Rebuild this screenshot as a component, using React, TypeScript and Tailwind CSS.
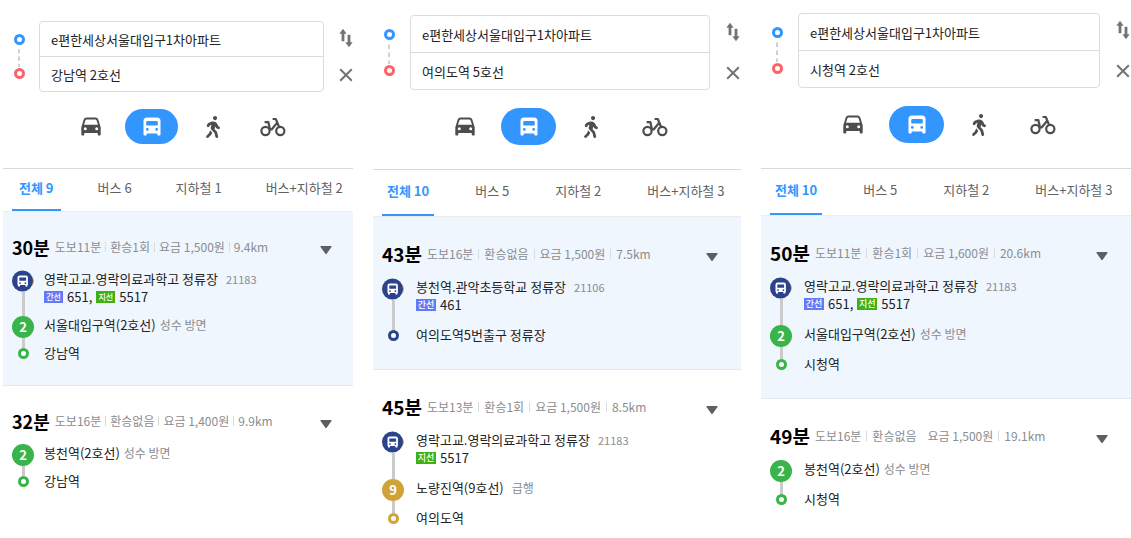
import { useState } from "react";
import { FaWalking } from "react-icons/fa";

type Kind = "bus" | "green" | "gold";
type Stop = {
  name: string;
  kind: Kind;
  line?: string;
  note?: string;
  code?: string;
  buses?: { type: "간선" | "지선"; no: string }[];
};
type Route = { time: string; facts: string[]; hideSecondDivider?: boolean; stops: Stop[] };
type Search = {
  id: string;
  compact?: boolean;
  top: string;
  tabsGap: string;
  to: string;
  tabs: string[];
  routes: Route[];
};

const FROM = "e편한세상서울대입구1차아파트";
const STATION: Stop = {
  name: "영락고교.영락의료과학고 정류장",
  kind: "bus",
  code: "21183",
  buses: [
    { type: "간선", no: "651," },
    { type: "지선", no: "5517" },
  ],
};

const SEARCHES: Search[] = [
  {
    id: "gangnam",
    compact: true,
    top: "pt-[21px]",
    tabsGap: "mt-6",
    to: "강남역 2호선",
    tabs: ["전체 9", "버스 6", "지하철 1", "버스+지하철 2"],
    routes: [
      {
        time: "30분",
        facts: ["도보11분", "환승1회", "요금 1,500원", "9.4km"],
        stops: [
          STATION,
          { name: "서울대입구역(2호선)", kind: "green", line: "2", note: "성수 방면" },
          { name: "강남역", kind: "green" },
        ],
      },
      {
        time: "32분",
        facts: ["도보16분", "환승없음", "요금 1,400원", "9.9km"],
        stops: [
          { name: "봉천역(2호선)", kind: "green", line: "2", note: "성수 방면" },
          { name: "강남역", kind: "green" },
        ],
      },
    ],
  },
  {
    id: "yeouido",
    top: "pt-[15px]",
    tabsGap: "mt-6",
    to: "여의도역 5호선",
    tabs: ["전체 10", "버스 5", "지하철 2", "버스+지하철 3"],
    routes: [
      {
        time: "43분",
        facts: ["도보16분", "환승없음", "요금 1,500원", "7.5km"],
        stops: [
          { name: "봉천역.관악초등학교 정류장", kind: "bus", code: "21106", buses: [{ type: "간선", no: "461" }] },
          { name: "여의도역5번출구 정류장", kind: "bus" },
        ],
      },
      {
        time: "45분",
        facts: ["도보13분", "환승1회", "요금 1,500원", "8.5km"],
        stops: [
          { ...STATION, buses: [{ type: "지선", no: "5517" }] },
          { name: "노량진역(9호선)", kind: "gold", line: "9", note: "급행" },
          { name: "여의도역", kind: "gold" },
        ],
      },
    ],
  },
  {
    id: "cityhall",
    top: "pt-[13px]",
    tabsGap: "mt-[25px]",
    to: "시청역 2호선",
    tabs: ["전체 10", "버스 5", "지하철 2", "버스+지하철 3"],
    routes: [
      {
        time: "50분",
        facts: ["도보11분", "환승1회", "요금 1,600원", "20.6km"],
        stops: [
          STATION,
          { name: "서울대입구역(2호선)", kind: "green", line: "2", note: "성수 방면" },
          { name: "시청역", kind: "green" },
        ],
      },
      {
        time: "49분",
        facts: ["도보16분", "환승없음", "요금 1,500원", "19.1km"],
        hideSecondDivider: true,
        stops: [
          { name: "봉천역(2호선)", kind: "green", line: "2", note: "성수 방면" },
          { name: "시청역", kind: "green" },
        ],
      },
    ],
  },
];

const DISC = { bus: "bg-[#2b438b]", green: "bg-[#38b44a]", gold: "bg-[#cfa338]" };
const RING = { bus: "border-[#2b438b]", green: "border-[#38b44a]", gold: "border-[#cfa338]" };

function CarIcon() {
  return (
    <svg viewBox="0 0 20 19" className="h-[19px] w-5" fill="currentColor" aria-hidden="true">
      <path
        fillRule="evenodd"
        d="M5.500.5h9a3 3 0 0 1 2.800 2L19.300 9q.4 1 .4 2v6.500a1 1 0 0 1-1 1h-1a1 1 0 0 1-1-1V16H3.300v1.500a1 1 0 0 1-1 1h-1a1 1 0 0 1-1-1V11q0-1 .4-2L2.700 2.500a3 3 0 0 1 2.800-2zM5.700 2.500q-1 0-1.300.9L3 7.800h14l-1.400-4.400q-.3-.9-1.300-.9zM4.300 10.300a1.500 1.500 0 1 0 0 3 1.500 1.500 0 0 0 0-3zM15.700 10.300a1.500 1.500 0 1 0 0 3 1.500 1.500 0 0 0 0-3z"
      />
    </svg>
  );
}

function BusIcon() {
  return (
    <svg viewBox="0 0 18 19" className="h-[19px] w-[18px]" fill="currentColor" aria-hidden="true">
      <path
        fillRule="evenodd"
        d="M4 .5h10a3.500 3.500 0 0 1 3.500 3.500v13.500a1 1 0 0 1-1 1h-1.200a1 1 0 0 1-1-1V16.500H3.700v1a1 1 0 0 1-1 1H1.500a1 1 0 0 1-1-1V4A3.500 3.500 0 0 1 4 .5zM4.500 4a1.300 1.300 0 0 0-1.300 1.300v2.400q0 .8.800.8h10q.8 0 .8-.8V5.300A1.300 1.300 0 0 0 13.500 4zM4.300 11a1.400 1.400 0 1 0 0 2.800 1.400 1.400 0 0 0 0-2.800zM13.700 11a1.400 1.400 0 1 0 0 2.800 1.400 1.400 0 0 0 0-2.800z"
      />
    </svg>
  );
}

function BikeIcon() {
  return (
    <svg viewBox="0 0 26 20" className="h-5 w-[26px]" fill="none" stroke="currentColor" strokeWidth="2.2" aria-hidden="true">
      <circle cx="5.5" cy="14" r="4.100" />
      <circle cx="20.300" cy="14" r="4.100" />
      <path d="M4.600 5.200h3.800l1.600 7.300h1.600l5.200-6.300M12.600 2h3.200l3.500 8.500" strokeLinejoin="round" />
    </svg>
  );
}

function SwapIcon() {
  return (
    <svg viewBox="0 0 14 20" className="h-5 w-[14px]" fill="currentColor" aria-hidden="true">
      <path d="M4 .8l3.600 5H5.400v7.400H2.600V5.800H.4zM10 19.200l-3.600-5h2.200V6.800h2.800v7.400h2.200z" />
    </svg>
  );
}

function CrossIcon() {
  return (
    <svg viewBox="0 0 14 14" className="size-[14px]" stroke="currentColor" strokeWidth="2" aria-hidden="true">
      <path d="M1.200 1.200l11.600 11.600M12.800 1.200L1.200 12.800" />
    </svg>
  );
}

function BusDisc() {
  return (
    <svg viewBox="0 0 22 22" className="size-[22px] shrink-0" aria-hidden="true">
      <ellipse cx="18" cy="11" rx="4" ry="4.5" fill="#e9a53a" />
      <circle cx="10.5" cy="11" r="10.5" fill="#2b438b" />
      <path
        fill="#fff"
        fillRule="evenodd"
        d="M7.500 5.500h6.400a2 2 0 0 1 2 2v7.600h-.5v1.300h-2v-1.300H8v1.300H6v-1.300h-.5V7.500a2 2 0 0 1 2-2zM7.300 7.500v3.300h6.800V7.500zM8 12.200a.9.9 0 1 0 0 1.800.9.9 0 0 0 0-1.800zM13.400 12.200a.9.9 0 1 0 0 1.800.9.9 0 0 0 0-1.800z"
      />
    </svg>
  );
}

function Marker({ stop, last }: { stop: Stop; last: boolean }) {
  if (last) {
    return (
      <div className="flex w-[22px] flex-col items-center">
        <span className="h-1 w-[3px] bg-[#cbcbcb]" />
        <span className={`size-[11px] rounded-full border-3 bg-white ${RING[stop.kind]}`} />
      </div>
    );
  }
  return (
    <div className="flex w-[22px] flex-col items-center">
      {stop.kind === "bus" ? (
        <BusDisc />
      ) : (
        <span
          className={`flex size-[22px] shrink-0 items-center justify-center rounded-full text-[13px] font-bold text-white ${DISC[stop.kind]}`}
        >
          {stop.line}
        </span>
      )}
      <span className="w-[3px] flex-1 bg-[#cbcbcb]" />
    </div>
  );
}

function StopRow({ stop, last, compact }: { stop: Stop; last: boolean; compact?: boolean }) {
  const gap = last ? "" : compact ? "pb-[10px]" : "pb-3";
  return (
    <li className={`flex ${compact ? "gap-[10px]" : "gap-3"}`}>
      <Marker stop={stop} last={last} />
      <div className={`text-[13px] leading-[18px] whitespace-nowrap text-[#222] ${gap}`}>
        <p className="flex items-center">
          {stop.name}
          {stop.note && (
            <span className={`text-xs leading-[18px] text-[#8a8d91] ${stop.kind === "gold" ? "ml-2" : "ml-1"}`}>
              {stop.note}
            </span>
          )}
          {stop.code && <span className="ml-2 text-[11px] leading-[18px] text-[#8a8d91]">{stop.code}</span>}
        </p>
        {stop.buses && (
          <p className="flex items-center gap-1">
            {stop.buses.map((b) => (
              <span key={b.no} className="flex items-center gap-1">
                <span
                  className={`flex h-3 items-center justify-center font-medium text-white ${
                    compact ? "w-[19px] text-[8px]" : "w-5 text-[9px]"
                  } ${b.type === "간선" ? "bg-[#6379f5]" : "bg-[#3fb015]"}`}
                >
                  {b.type}
                </span>
                {b.no}
              </span>
            ))}
          </p>
        )}
      </div>
    </li>
  );
}

function RouteCard({ route, active, compact }: { route: Route; active: boolean; compact?: boolean }) {
  return (
    <article
      className={`pl-[9px] ${compact ? "pt-[23px] pr-[18px] pb-6" : "pt-[25px] pr-5 pb-[26px]"} ${
        active ? "bg-[#eff6fe] shadow-[inset_0_-1px_0_#e4e9ee]" : ""
      }`}
    >
      <header className={`flex h-6 items-center ${compact ? "mb-[11px]" : "mb-3"}`}>
        <h2 className={`font-bold text-black ${compact ? "text-[18px]" : "text-[19px]"}`}>{route.time}</h2>
        <ul className="ml-[5px] flex flex-1 items-center text-xs whitespace-nowrap text-[#8a8d91]">
          {route.facts.map((fact, i) => (
            <li key={fact} className="flex items-center">
              {i > 0 && (
                <span
                  className={`h-[10px] w-px ${compact ? "mx-1" : "mx-[5px]"} ${
                    i === 2 && route.hideSecondDivider ? "" : "bg-[#d9dcdf]"
                  }`}
                />
              )}
              {fact}
            </li>
          ))}
        </ul>
        <button type="button" aria-label="상세 보기" className="p-[3px] pt-2 text-[#5c5f63]">
          <svg viewBox="0 0 12 8" className="h-2 w-3" fill="currentColor" aria-hidden="true">
            <path d="M1 0h10q1 0 .5 1L6.800 7.400q-.8 1-1.600 0L.5 1Q0 0 1 0z" />
          </svg>
        </button>
      </header>
      <ol>
        {route.stops.map((s, i) => (
          <StopRow key={s.name} stop={s} last={i === route.stops.length - 1} compact={compact} />
        ))}
      </ol>
    </article>
  );
}

function SearchPanel({ data }: { data: Search }) {
  const [from, setFrom] = useState(FROM);
  const [to, setTo] = useState(data.to);
  const [tab, setTab] = useState(0);
  const { compact } = data;
  const field = `block w-full px-[11px] text-[13px] text-[#222] outline-none ${compact ? "h-[34px]" : "h-9"}`;
  return (
    <section className={`min-w-0 overflow-hidden ${data.top}`}>
      <form className="flex">
        <div
          className={`flex shrink-0 flex-col items-center ${compact ? "w-9 py-[13px] pr-1" : "w-[37px] py-[14px] pr-[5px]"}`}
        >
          <span className="size-[11px] rounded-full border-3 border-[#3396ff]" />
          <svg viewBox="0 0 2 20" preserveAspectRatio="none" className="my-px w-[2px] flex-1" aria-hidden="true">
            <path d="M1 3v17" stroke="#d0d0d0" strokeWidth="2" strokeDasharray="4 3" />
          </svg>
          <span className="size-[11px] rounded-full border-3 border-[#fb6466]" />
        </div>
        <div className="min-w-0 flex-1 rounded-sm border border-[#dcdcdc]">
          <input aria-label="출발지" className={field} value={from} onChange={(e) => setFrom(e.target.value)} />
          <div className="h-px bg-[#dcdcdc]" />
          <input aria-label="도착지" className={field} value={to} onChange={(e) => setTo(e.target.value)} />
        </div>
        <div
          className={`flex shrink-0 flex-col items-end justify-between pt-[7px] pb-[10px] text-[#737373] ${
            compact ? "w-[29px]" : "w-[31px] pr-px"
          }`}
        >
          <button type="button" aria-label="출발지와 도착지 바꾸기">
            <SwapIcon />
          </button>
          <button type="button" aria-label="지우기">
            <CrossIcon />
          </button>
        </div>
      </form>

      <nav
        aria-label="이동 수단"
        className={`flex items-center text-[#4d4d4d] ${compact ? "mt-[17px] pl-[78px]" : "mt-[18px] pl-[82px]"}`}
      >
        <button type="button" aria-label="자동차">
          <CarIcon />
        </button>
        <button
          type="button"
          aria-label="대중교통"
          className={`flex items-center justify-center rounded-full bg-[#3396ff] text-white ${
            compact ? "ml-6 h-[35px] w-[53px]" : "ml-[26px] h-[37px] w-[55px]"
          }`}
        >
          <BusIcon />
        </button>
        <button type="button" aria-label="도보" className="ml-6">
          <FaWalking className="size-[22px]" />
        </button>
        <button type="button" aria-label="자전거" className={compact ? "ml-9" : "ml-10"}>
          <BikeIcon />
        </button>
      </nav>

      <div
        role="tablist"
        className={`flex border-y border-t-[#d9d9d9] border-b-[#ececec] pl-[9px] text-[13px] whitespace-nowrap ${
          data.tabsGap
        } ${compact ? "h-11 gap-[30px]" : "h-12 gap-9"}`}
      >
        {data.tabs.map((label, i) => (
          <button
            key={label}
            type="button"
            role="tab"
            aria-selected={tab === i}
            onClick={() => setTab(i)}
            className={`border-b-2 pb-[2px] ${compact ? "px-[7px]" : "px-[5px]"} ${
              tab === i ? "border-[#3396ff] font-bold text-[#3396ff]" : "border-transparent text-[#5f6164]"
            }`}
          >
            {label}
          </button>
        ))}
      </div>

      {data.routes.map((r, i) => (
        <RouteCard key={r.time} route={r} active={i === 0} compact={compact} />
      ))}
    </section>
  );
}

export default function App() {
  return (
    <main className="grid min-h-screen grid-cols-[350fr_368fr_370fr] gap-x-5 bg-white pl-[3px] font-['Noto_Sans_CJK_KR',sans-serif]">
      {SEARCHES.map((s) => (
        <SearchPanel key={s.id} data={s} />
      ))}
    </main>
  );
}
